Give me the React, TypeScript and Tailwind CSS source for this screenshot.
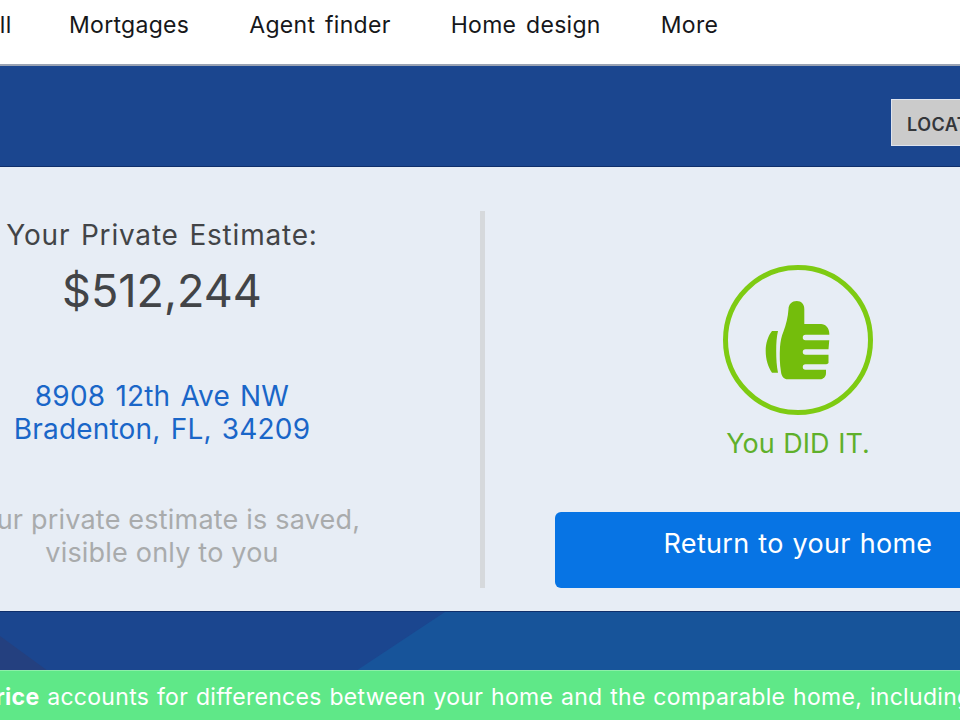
const FONT = "font-['Inter','Liberation_Sans',sans-serif]";

function ThumbBadge() {
  return (
    <svg width="150" height="150" viewBox="0 0 150 150" className="block">
      <circle cx="75" cy="75" r="72.5" fill="none" stroke="#7ecb12" strokeWidth="5" />
      <path d="M55 66H49C45 71 42.7 78 42.7 86C42.7 94 45 102 49 107.7H55C53.6 101 53.2 94 53.2 86C53.2 78 53.6 72 55 66Z" fill="#74bd0c" />
      <path
        d="M65.5 44C65.7 39 69 36 73.7 36C78.5 36 81.3 39.5 81.3 44V59H98C102.5 59 106.3 63 106.3 68.5V75L105.5 84V98L103 100V108C103 112 100 114.3 97 114.3H65C60.5 114.3 58.5 111 58 107C56.7 99 56.5 90 57 82C57.5 76 58.5 71 60.5 66.5C63 60 65 52 65.5 44Z"
        fill="#74bd0c"
      />
      <path d="M82.5 72.5H108M82.5 87H108M82.5 102H108" stroke="#e7edf5" strokeWidth="5.5" strokeLinecap="round" fill="none" />
    </svg>
  );
}

export default function App() {
  return (
    <div className={`relative w-[960px] h-[720px] overflow-hidden bg-white ${FONT}`}>
      {/* nav */}
      <nav className="h-[64px] flex items-start pt-[11px] gap-[60px] -ml-[29px] text-[23px] leading-[28px] text-[#16171a] whitespace-nowrap tracking-[0.3px] [word-spacing:3px]">
        <span className="w-[38px] text-right">Sell</span>
        <span>Mortgages</span>
        <span>Agent finder</span>
        <span>Home design</span>
        <span>More</span>
      </nav>

      {/* hero strip */}
      <div className="h-[103px] bg-[#1b468f] border-t-2 border-t-[#9aa3b3] border-b border-b-[#0f2f6b] flex justify-end items-start pt-[33px]">
        <div className="w-[100px] h-[47px] -mr-[31px] shrink-0 bg-[#cbcbcb] border border-[#dfe4ee] pl-[15px] pt-[3px] flex items-center">
          <span className="text-[18px] font-semibold text-[#34363a] tracking-[0.5px]">LOCATE</span>
        </div>
      </div>

      {/* result card */}
      <div className="h-[444px] bg-[#e7edf5] flex -ml-[156px] w-[1300px] pt-[44px] pb-[23px]">
        <div className="w-[636px] shrink-0 flex flex-col items-center text-center">
          <div className="mt-[6px] text-[28px] leading-[36px] text-[#424447] tracking-[0.8px] [word-spacing:2px]">Your Private Estimate:</div>
          <div className="mt-[10px] text-[45px] leading-[56px] text-[#424447]">$512,244</div>
          <div className="mt-[61px] text-[28px] leading-[33px] text-[#1a66c8] tracking-[0.2px] [word-spacing:2px]">
            8908 12th Ave NW
            <br />
            Bradenton, FL, 34209
          </div>
          <div className="mt-[57px] text-[27px] leading-[33px] text-[#a9abac] tracking-[0.2px]">
            Your private estimate is saved,
            <br />
            visible only to you
          </div>
        </div>

        <div className="w-[5px] bg-[#d6d9dc] shrink-0" />

        <div className="w-[626px] shrink-0 flex flex-col items-center">
          <div className="mt-[54px]">
            <ThumbBadge />
          </div>
          <div className="mt-[12px] text-[27px] leading-[34px] text-[#5fb02b] [word-spacing:1px]">You DID IT.</div>
          <div className="mt-[51px] w-[486px] h-[76px] rounded-[6px] bg-[#0774e4] text-white text-[27px] leading-[32px] text-center pt-[16px] tracking-[0.3px] [word-spacing:1px]">
            Return to your home
          </div>
        </div>
      </div>

      {/* lower band */}
      <div className="relative h-[59px] bg-[#1b468f] border-t border-t-[#0f2f6b] overflow-hidden">
        <svg width="960" height="59" viewBox="0 0 960 59" className="absolute left-0 top-0">
          <polygon points="445,0 960,0 960,59 356,59" fill="#17549a" />
          <polygon points="0,24 48,59 0,59" fill="#24407f" />
        </svg>
      </div>

      {/* disclaimer */}
      <div className="h-[50px] bg-[#5fe888] border-t border-t-[#8cefa9] text-white text-[23px] leading-[52px] whitespace-nowrap -ml-[20px] w-[1200px] tracking-[0.3px] [word-spacing:1px]">
        <span className="font-bold">Price</span> accounts for differences between your home and the comparable home, including
      </div>
    </div>
  );
}
